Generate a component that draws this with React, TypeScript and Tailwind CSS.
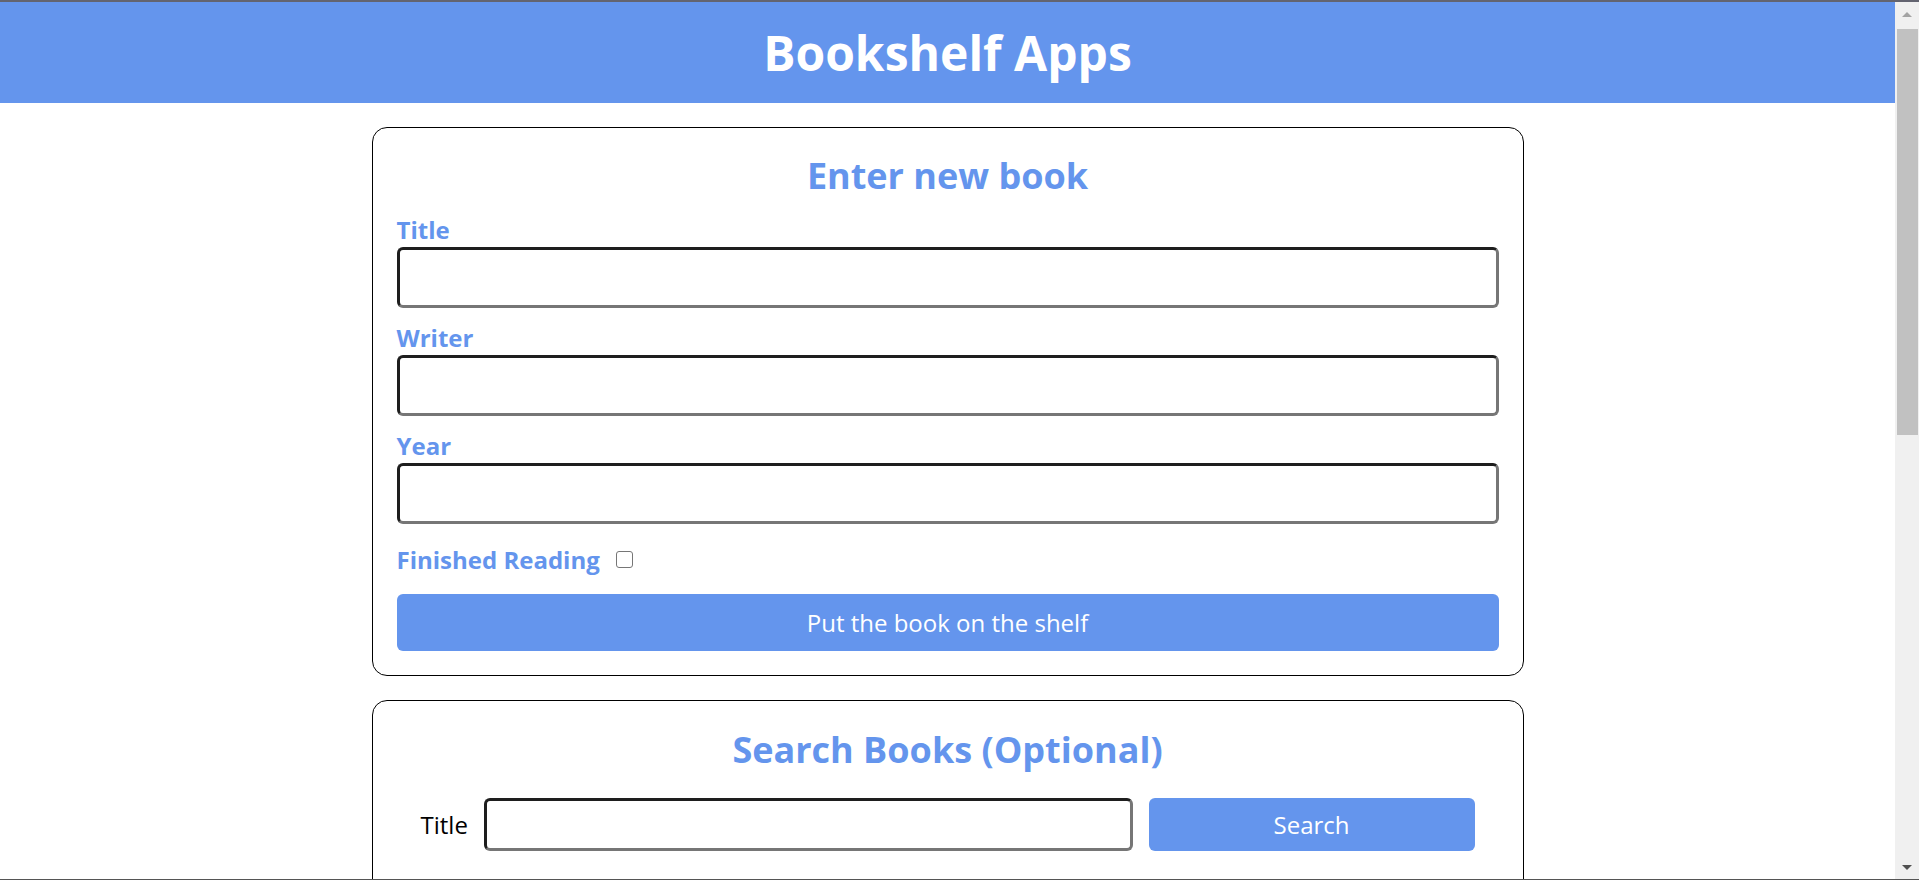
import React from "react";

const borderCls =
  "rounded-[6px] border-[3px] border-t-[#1e1e1e] border-l-[#1e1e1e] border-r-[#767676] border-b-[#767676] bg-white px-3 text-[24px] outline-none";

function Field({ label }: { label: string }) {
  return (
    <div className="mt-[13px]">
      <label className="block text-[24px] leading-[33px] font-bold text-[#6495ED]">{label}</label>
      <input type="text" className={"block w-full h-[61px] mt-[1px] " + borderCls} />
    </div>
  );
}

export default function App() {
  return (
    <div className="h-[880px] w-full overflow-hidden flex flex-col bg-white font-['Open_Sans',sans-serif]">
      <div className="h-[2px] shrink-0 bg-[#636470]" />
      <div className="flex flex-1 min-h-0">
        <main className="flex-1 min-w-0 overflow-hidden">
          <header className="h-[101px] bg-[#6495ED] flex items-center justify-center">
            <h1 className="text-[48px] leading-[65px] font-bold text-white">Bookshelf Apps</h1>
          </header>

          <section className="w-[1152px] mx-auto mt-[24px] border border-black rounded-[15px] px-[24px] pt-[23px] pb-[24px]">
            <h2 className="text-center text-[36px] leading-[49px] font-bold text-[#6495ED]">Enter new book</h2>
            <Field label="Title" />
            <Field label="Writer" />
            <Field label="Year" />
            <div className="mt-[19px] flex items-center gap-[16px] h-[33px]">
              <label className="text-[24px] leading-[33px] font-bold text-[#6495ED]">Finished Reading</label>
              <input
                type="checkbox"
                className="appearance-none w-[17px] h-[17px] border-[1.5px] border-[#767676] rounded-[3px] bg-white"
              />
            </div>
            <button className="mt-[18px] w-full h-[57px] rounded-[6px] bg-[#6495ED] text-white text-[24px] leading-[33px]">
              Put the book on the shelf
            </button>
          </section>

          <section className="w-[1152px] mx-auto mt-[24px] border border-black rounded-[15px] px-[24px] pt-[24px] pb-[24px]">
            <h2 className="text-center text-[36px] leading-[49px] font-bold text-[#6495ED]">Search Books (Optional)</h2>
            <div className="mt-[24px] px-[24px] h-[53px] flex items-center">
              <label className="shrink-0 text-[24px] leading-[33px] text-black">Title</label>
              <input type="text" className={"ml-[16px] flex-1 min-w-0 h-[53px] " + borderCls} />
              <button className="ml-[16px] shrink-0 w-[326px] h-[53px] rounded-[6px] bg-[#6495ED] text-white text-[24px] leading-[33px]">
                Search
              </button>
            </div>
            <div className="h-[200px]" />
          </section>
        </main>
        <div className="w-[24px] shrink-0 bg-[#f0f0f0] flex flex-col items-center">
          <div className="h-[25px] w-full flex items-center justify-center">
            <svg width="10" height="6" viewBox="0 0 10 6">
              <path d="M0 5 L5 0 L10 5 Z" fill="#a3a3a3" />
            </svg>
          </div>
          <div className="mt-[2px] h-[406px] w-[21px] bg-[#c1c1c1]" />
          <div className="flex-1" />
          <div className="h-[22px] w-full flex items-center justify-center">
            <svg width="10" height="6" viewBox="0 0 10 6">
              <path d="M0 0 L10 0 L5 5 Z" fill="#505050" />
            </svg>
          </div>
        </div>
      </div>
      <div className="h-[1px] shrink-0 bg-[#555555]" />
    </div>
  );
}
